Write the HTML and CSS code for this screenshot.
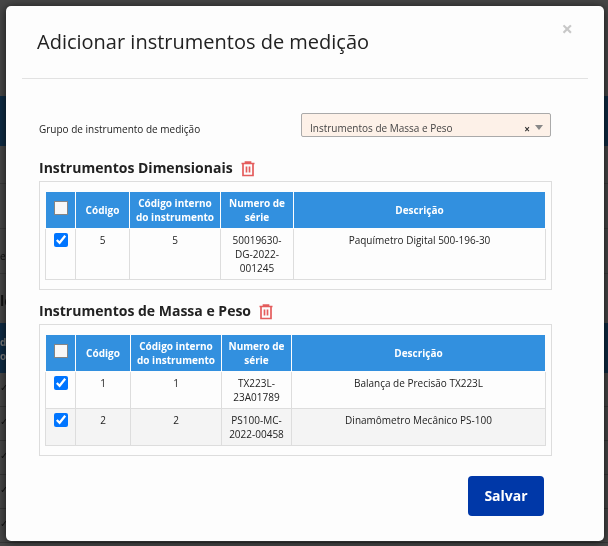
FILE: index.html
```html
<!DOCTYPE html>
<html lang="pt-BR">
<head>
<meta charset="utf-8">
<title>Adicionar instrumentos de medição</title>
<link rel="stylesheet" href="styles.css">
</head>
<body>
<div class="page" aria-hidden="true">
  <div class="page-top"></div>
  <div class="page-band"></div>
  <div class="page-rows"><i></i><i>e</i><i class="heading">lo</i></div>
  <div class="page-band labels">d<br>o</div>
  <div class="page-list"><i>✓</i><i>✓</i><i>✓</i><i>✓</i><i>✓</i></div>
</div>
<div class="overlay">
  <div class="modal" role="dialog" aria-labelledby="title">
    <header class="modal-header">
      <h1 id="title">Adicionar instrumentos de medição</h1>
      <button class="close" type="button" aria-label="Fechar">×</button>
    </header>
    <form class="modal-body">
      <div class="field">
        <label for="grupo">Grupo de instrumento de medição</label>
        <div class="combo">
          <select id="grupo"><option>Instrumentos de Massa e Peso</option></select>
          <button class="clear" type="button" aria-label="Limpar">×</button>
          <svg class="arrow" viewBox="0 0 8 5"><path d="M0 0h8L4 5z"/></svg>
        </div>
      </div>

      <section class="group">
        <h2>Instrumentos Dimensionais
          <button class="trash" type="button" aria-label="Remover grupo"><svg viewBox="0 0 14 16"><path d="M0.5 2.5h13M4.5 2V1h5v1M2 3v11.5h10V3M5.5 5.5v6M8.5 5.5v6"/></svg></button>
        </h2>
        <div class="panel">
          <table class="dimensionais">
            <colgroup><col class="c-check"><col class="c-code"><col class="c-internal"><col class="c-serial"><col></colgroup>
            <thead><tr><th><input type="checkbox" aria-label="Selecionar todos"></th><th>Código</th><th>Código interno do instrumento</th><th>Numero de série</th><th>Descrição</th></tr></thead>
            <tbody>
              <tr><td><input type="checkbox" checked aria-label="Selecionar 5"></td><td>5</td><td>5</td><td>50019630-<br>DG-2022-<br>001245</td><td>Paquímetro Digital 500-196-30</td></tr>
            </tbody>
          </table>
        </div>
      </section>

      <section class="group">
        <h2>Instrumentos de Massa e Peso
          <button class="trash" type="button" aria-label="Remover grupo"><svg viewBox="0 0 14 16"><path d="M0.5 2.5h13M4.5 2V1h5v1M2 3v11.5h10V3M5.5 5.5v6M8.5 5.5v6"/></svg></button>
        </h2>
        <div class="panel">
          <table class="massa">
            <colgroup><col class="c-check"><col class="c-code"><col class="c-internal"><col class="c-serial"><col></colgroup>
            <thead><tr><th><input type="checkbox" aria-label="Selecionar todos"></th><th>Código</th><th>Código interno do instrumento</th><th>Numero de série</th><th>Descrição</th></tr></thead>
            <tbody>
              <tr><td><input type="checkbox" checked aria-label="Selecionar 1"></td><td>1</td><td>1</td><td>TX223L-<br>23A01789</td><td>Balança de Precisão TX223L</td></tr>
              <tr><td><input type="checkbox" checked aria-label="Selecionar 2"></td><td>2</td><td>2</td><td>PS100-MC-<br>2022-00458</td><td>Dinamômetro Mecânico PS-100</td></tr>
            </tbody>
          </table>
        </div>
      </section>

      <footer class="actions"><button class="save" type="button">Salvar</button></footer>
    </form>
  </div>
</div>
</body>
</html>
```

FILE: styles.css
```css
* { box-sizing: border-box; }
body {
  margin: 0;
  background: #464646;
  color: #222;
  font: 10px/14px "Open Sans", "Noto Sans", sans-serif;
}
button, select, input { font: inherit; color: inherit; margin: 0; }
button { border: 0; padding: 0; background: none; cursor: pointer; }

.page { position: fixed; inset: 0; overflow: hidden; color: #111; }
.page i { font-style: normal; }
.page-top { height: 96px; }
.page-band { height: 50px; background: #0f2b43; }
.labels { padding-top: 12px; color: #777; font-weight: 700; }
.page-rows { height: 177px; padding-top: 37px; }
.page-rows i { display: block; height: 45px; padding-top: 20px; border-top: 1px solid #3a3a3a; }
.page-rows .heading { font-size: 14px; font-weight: 700; }
.page-list i {
  display: block;
  height: 34px;
  padding-top: 8px;
  border-bottom: 1px solid #363636;
  font-family: "DejaVu Sans", sans-serif;
  font-weight: 700;
}

.overlay { position: relative; padding: 6px 4px 5px 6px; }
.modal {
  background: #fdfdfd;
  border-radius: 5px;
  box-shadow: 0 1px 8px rgba(0, 0, 0, .7);
}
.modal-header {
  display: flex;
  justify-content: space-between;
  align-items: flex-start;
  height: 73px;
  margin: 0 16px;
  padding: 16px 15px 0;
  border-bottom: 1px solid #e2e2e2;
}
h1 { margin: 6px 0 0; font-size: 20px; line-height: 28px; font-weight: 400; }
.close { font-size: 20px; line-height: 14px; font-weight: 700; color: #c8c8c8; }

.modal-body { padding: 34px 52px 25px 33px; }
.field { display: flex; justify-content: space-between; height: 24px; margin-bottom: 20px; padding-right: 1px; }
.field label { padding-top: 9px; }
.combo { position: relative; width: 250px; }
.combo select {
  appearance: none;
  width: 100%;
  height: 24px;
  padding: 6px 40px 0 8px;
  border: 1px solid #aaa;
  border-radius: 2px;
  background: #fdf1e8;
  color: #444;
}
.clear { position: absolute; top: 9px; right: 21px; line-height: 14px; font-weight: 700; color: #333; }
.arrow { position: absolute; top: 12px; right: 8px; width: 8px; height: 5px; fill: #888; }

.group { margin-bottom: 10px; }
h2 {
  display: flex;
  align-items: center;
  gap: 8px;
  margin: 0;
  height: 24px;
  padding-bottom: 2px;
  font-size: 14px;
  line-height: 20px;
  font-weight: 700;
}
.trash { display: flex; padding-top: 2px; }
.trash svg { width: 14px; height: 16px; fill: none; stroke: #e45c5c; }
.trash path { stroke-width: 1.7; }

.panel { padding: 9px 5px; border: 1px solid #ddd; }
table { width: 100%; table-layout: fixed; border-collapse: collapse; text-align: center; }
.c-check { width: 30px; }
.c-code { width: 54px; }
.massa .c-code { width: 55px; }
.c-internal { width: 91px; }
.c-serial { width: 73px; }
.massa .c-serial { width: 70px; }
th, td { padding: 4px; border: 1px solid #ddd; vertical-align: top; }
th {
  padding: 4px 2px;
  border-color: #fdfdfd;
  background: #3290df;
  background-clip: padding-box;
  color: #fff;
  font-weight: 700;
  vertical-align: middle;
}
tbody tr:nth-child(even) { background: #f4f4f4; }
input[type="checkbox"] { display: block; width: 14px; height: 14px; margin: 0 auto; accent-color: #0075ff; }
th input[type="checkbox"] {
  appearance: none;
  margin-bottom: 4px;
  border: 1px solid #858585;
  background: #f8f8f8;
}
th input[type="checkbox"]:checked { background: #0075ff; }

.actions { display: flex; justify-content: flex-end; padding: 10px 8px 0 0; }
.save {
  width: 76px;
  height: 40px;
  border-radius: 4px;
  background: #0038a8;
  color: #fff;
  font-size: 14px;
  font-weight: 700;
}
```
